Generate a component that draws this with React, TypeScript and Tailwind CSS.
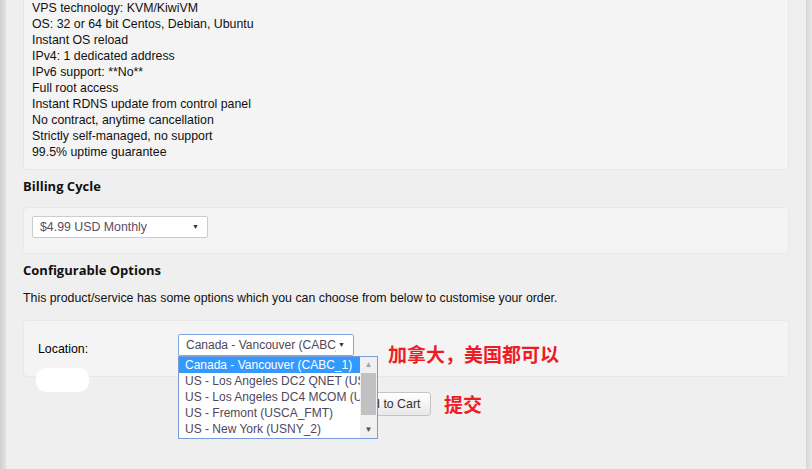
import React from 'react';

const features = [
  'VPS technology: KVM/KiwiVM',
  'OS: 32 or 64 bit Centos, Debian, Ubuntu',
  'Instant OS reload',
  'IPv4: 1 dedicated address',
  'IPv6 support: **No**',
  'Full root access',
  'Instant RDNS update from control panel',
  'No contract, anytime cancellation',
  'Strictly self-managed, no support',
  '99.5% uptime guarantee',
];

const locations = [
  'Canada - Vancouver (CABC_1)',
  'US - Los Angeles DC2 QNET (USCA_2)',
  'US - Los Angeles DC4 MCOM (USCA_4)',
  'US - Fremont (USCA_FMT)',
  'US - New York (USNY_2)',
];

const arial = "font-['Liberation_Sans',Arial,sans-serif]";
const heading = "font-['Open_Sans',sans-serif] font-bold text-[13px] leading-[16px] text-[#111]";

export default function App() {
  return (
    <div className={`relative flex w-[812px] h-[469px] overflow-hidden ${arial} text-[12.35px] leading-[16px] text-[#111]`}>
      {/* left shadow */}
      <div className="w-[6px] bg-gradient-to-r from-[#cfcfcf] to-[#e4e4e4]" />

      <div className="flex-1 bg-[#efefef] px-[17px]">
        {/* Product description */}
        <div className="bg-[#f4f4f4] border border-t-0 border-[#e6e6e6] rounded-b-[4px] px-[8px] pb-[9px]">
          {features.map((f) => (
            <div key={f}>{f}</div>
          ))}
        </div>

        <h3 className={`${heading} mt-[8px]`}>Billing Cycle</h3>

        <div className="mt-[13px] bg-[#f4f4f4] border border-[#e8e8e8] rounded-[4px] px-[8px] pt-[8px] pb-[15px]">
          <div className="relative w-[176px] h-[22px] bg-white border border-[#cccccc] rounded-[2px] flex items-center pl-[7px] text-[#5a4f63]">
            $4.99 USD Monthly
            <span className="absolute right-[8px] top-0 h-full flex items-center text-[7px] text-[#333]">▼</span>
          </div>
        </div>

        <h3 className={`${heading} mt-[8px]`}>Configurable Options</h3>

        <p className="mt-[12px]">
          This product/service has some options which you can choose from below to customise your order.
        </p>

        <div className="relative mt-[14px] h-[57px] bg-[#f4f4f4] border border-[#e8e8e8] rounded-[4px] flex pt-[13px]">
          <div className="w-[154px] pl-[14px] pt-[7px] text-black">Location:</div>
          <div className="relative">
            <div className="relative w-[176px] h-[22px] bg-white border border-[#7ea7e3] rounded-[2px] flex items-center pl-[7px] text-[12px] text-[#4f4757] overflow-hidden whitespace-nowrap">
              Canada - Vancouver (CABC_1)
              <span className="absolute right-0 top-0 h-full w-[17px] bg-white" />
              <span className="absolute right-[8px] top-0 h-full flex items-center text-[7px] text-[#333]">▼</span>
            </div>
          </div>
        </div>

        <div className="mt-[15px] flex pl-[324px] items-center">
          <button className="h-[24px] px-[10px] border border-[#c4c4c4] rounded-[3px] bg-gradient-to-b from-white to-[#e8e8e8] text-[#333] text-[12.35px]">
            Add to Cart
          </button>
        </div>
      </div>

      {/* right shadow */}
      <div className="w-[6px] bg-gradient-to-r from-[#d6d6d6] to-[#e9e9e9]" />

      {/* open dropdown list */}
      <div className="absolute left-[178px] top-[356px] w-[200px] h-[83px] bg-white border border-[#7a9cd6] flex text-[12px]">
        <div className="flex-1 overflow-hidden whitespace-nowrap">
          {locations.map((l, i) => (
            <div
              key={l}
              className={
                i === 0
                  ? 'h-[16px] pl-[6px] bg-[#3399ff] text-white'
                  : 'h-[16px] pl-[6px] text-[#50475a]'
              }
            >
              {l}
            </div>
          ))}
        </div>
        <div className="w-[17px] bg-[#f0f0f0] flex flex-col items-center">
          <span className="h-[16px] text-[8px] leading-[16px] text-[#a3a3a3]">▲</span>
          <div className="w-[15px] h-[42px] bg-[#c1c1c1]" />
          <div className="flex-1" />
          <span className="h-[16px] text-[8px] leading-[16px] text-[#505050]">▼</span>
        </div>
      </div>

      {/* annotations */}
      <div className="absolute left-[388px] top-[342px] text-[19px] leading-[24px] font-bold text-[#ee1c24] font-['Noto_Sans_CJK_SC',sans-serif]">
        加拿大，美国都可以
      </div>
      <div className="absolute left-[444px] top-[392px] text-[19px] leading-[24px] font-bold text-[#ee1c24] font-['Noto_Sans_CJK_SC',sans-serif]">
        提交
      </div>

      {/* redaction blob */}
      <div className="absolute left-[36px] top-[368px] w-[53px] h-[24px] bg-white rounded-[10px]" />
    </div>
  );
}
